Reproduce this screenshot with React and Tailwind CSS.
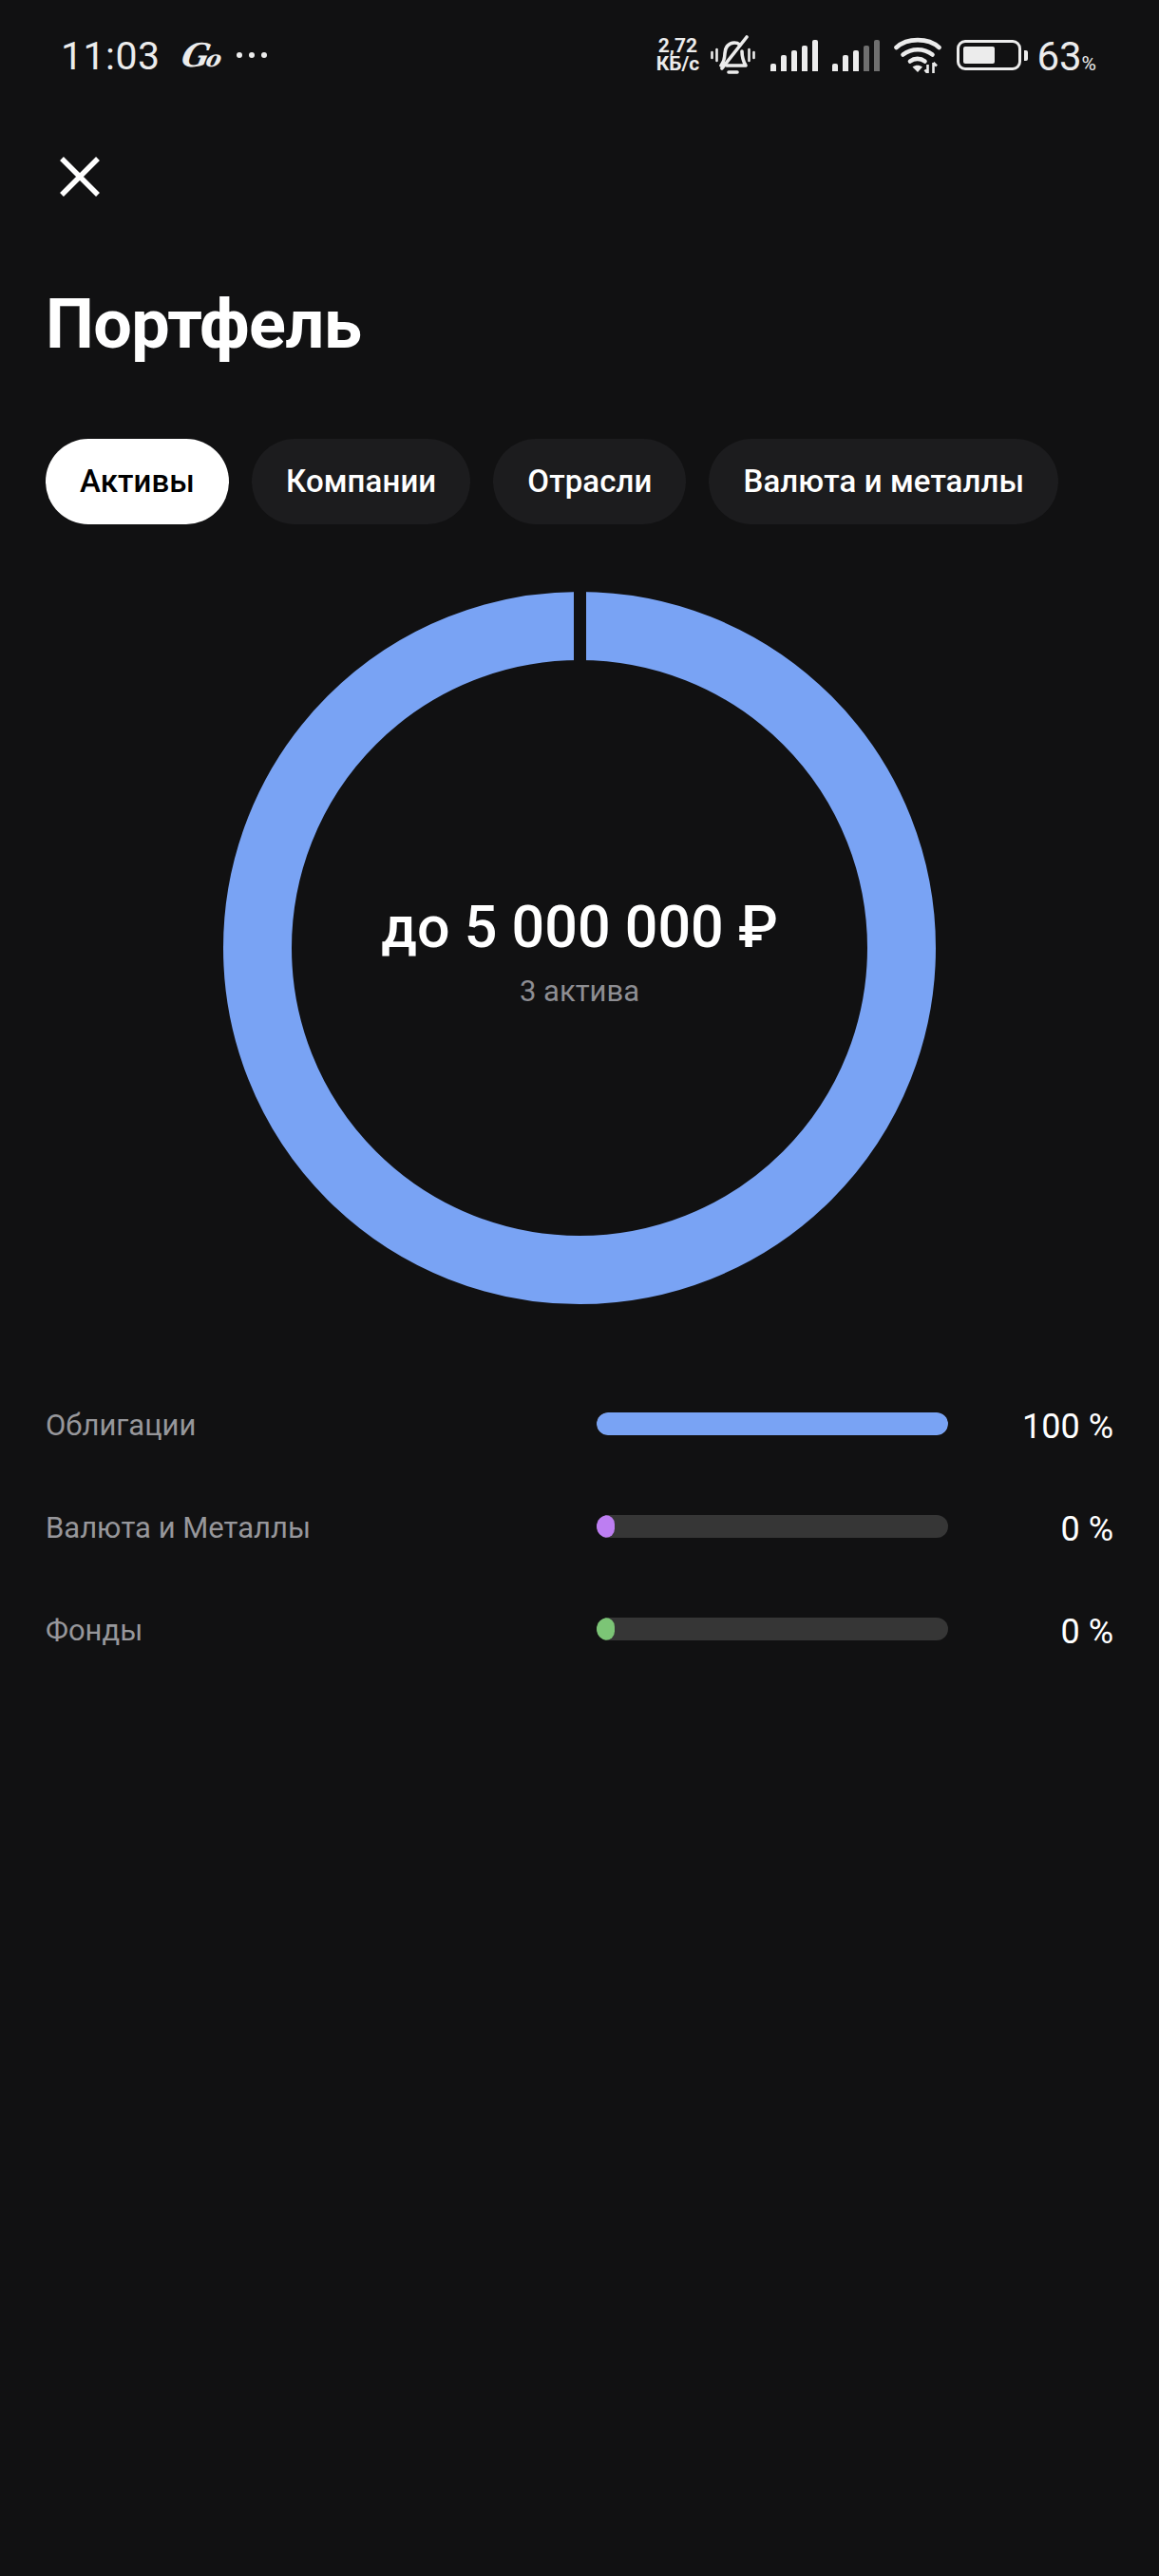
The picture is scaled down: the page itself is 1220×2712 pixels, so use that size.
import React from 'react';

const tabs = ['Активы', 'Компании', 'Отрасли', 'Валюта и металлы'];

const rows = [
  { label: 'Облигации', value: '100 %', color: 'bg-[#79a3f4]', width: '100%' },
  { label: 'Валюта и Металлы', value: '0 %', color: 'bg-[#bd7ef2]', width: '19px' },
  { label: 'Фонды', value: '0 %', color: 'bg-[#7cc576]', width: '19px' },
];

function Signal({ dim = 0 }) {
  const heights = [8, 17, 22, 27, 33];
  return (
    <div className="flex items-end gap-[5px] h-[33px] w-[50px]">
      {heights.map((h, i) => (
        <div
          key={i}
          className={i >= heights.length - dim ? 'w-[6px] rounded-t-[2px] bg-[#6f6f6f]' : 'w-[6px] rounded-t-[2px] bg-[#ececec]'}
          style={{ height: h }}
        />
      ))}
    </div>
  );
}

function BellOff() {
  return (
    <svg width="47" height="42" viewBox="0 0 47 42" fill="none" stroke="#ececec" strokeWidth="3.6" strokeLinecap="round" strokeLinejoin="round">
      <path d="M11 32c3-4 4-7 4-13 0-6 4-11 10-11 2 0 4 .6 5.500 1.800" />
      <path d="M33 17c0 6 1 10 4 15H17" />
      <path d="M19 39h9" />
      <path d="M38 2 12 35" />
      <path d="M1.500 18v6M6.500 15v12M40.500 15v12M45.500 18v6" strokeWidth="2.600" />
    </svg>
  );
}

function Wifi() {
  return (
    <svg width="50" height="38" viewBox="0 0 50 38" fill="none">
      <g stroke="#ececec" strokeWidth="4.600" strokeLinecap="round">
        <path d="M2.500 11C14 0.500 36 0.500 47.500 11" />
        <path d="M9.500 18.500c9-7 22-7 31 0" />
        <path d="M17 25.500c4.500-3.500 11-3.500 15.500 0" />
      </g>
      <path d="M19.500 31.500c3.500-2.500 7-2.500 10.500 0l-5 5.500z" fill="#ececec" />
      <path d="M35.500 29v9M41.500 27v11M35.500 38l-3-3.500M41.500 27l3.500 3.500" stroke="#ececec" strokeWidth="2.600" />
    </svg>
  );
}

function StatusBar() {
  return (
    <div className="flex items-center justify-between h-[116px] pl-[64px] pr-[66px] text-[#ececec]">
      <div className="flex items-center">
        <span className="text-[41px] leading-none tracking-[0.5px] mt-[2px]">11:03</span>
        <span className="ml-[23px] w-[38px] flex items-baseline leading-none font-bold italic font-['DejaVu_Serif',serif] -skew-x-12">
          <span className="text-[34px] tracking-[-3px]">G</span>
          <span className="text-[24px]">o</span>
        </span>
        <div className="ml-[19px] flex gap-[7px]">
          <div className="w-[6px] h-[6px] rounded-full bg-[#ececec]" />
          <div className="w-[6px] h-[6px] rounded-full bg-[#ececec]" />
          <div className="w-[6px] h-[6px] rounded-full bg-[#ececec]" />
        </div>
      </div>
      <div className="flex items-center">
        <div className="flex flex-col items-center text-[21px] leading-[19px] font-bold w-[46px]">
          <span>2,72</span>
          <span>КБ/с</span>
        </div>
        <div className="ml-[12px]"><BellOff /></div>
        <div className="ml-[16px]"><Signal /></div>
        <div className="ml-[15px]"><Signal dim={2} /></div>
        <div className="ml-[15px]"><Wifi /></div>
        <div className="ml-[16px] flex items-center">
          <div className="w-[68px] h-[32px] rounded-[9px] border-[3px] border-[#ececec] p-[4px]">
            <div className="h-full w-[33px] rounded-[2px] bg-[#ececec]" />
          </div>
          <div className="ml-[3px] w-[4px] h-[11px] rounded-r-[2px] bg-[#ececec]" />
        </div>
        <div className="ml-[9px] mt-[4px] flex items-baseline">
          <span className="text-[42px] leading-none">63</span>
          <span className="text-[21px] leading-none">%</span>
        </div>
      </div>
    </div>
  );
}

function CloseIcon() {
  return (
    <svg width="42" height="42" viewBox="0 0 42 42" stroke="#ffffff" strokeWidth="5.5" className="block">
      <path d="M2 2 40 40M40 2 2 40" />
    </svg>
  );
}

function Donut() {
  return (
    <div className="grid place-items-center mt-[71px]">
      <svg width="750" height="750" viewBox="0 0 750 750" className="col-start-1 row-start-1 block">
        <circle cx="375" cy="375" r="339" fill="none" stroke="#79a3f4" strokeWidth="72" />
        {/* straight gap at 12 o'clock */}
        <rect x="369" y="0" width="13" height="76" fill="#111112" />
      </svg>
      <div className="col-start-1 row-start-1 flex flex-col items-center mt-[8px]">
        <div className="text-[61px] leading-[72px] font-medium text-white">до 5 000 000 ₽</div>
        <div className="mt-[12px] text-[31px] leading-[40px] text-[#8e8e93]">3 актива</div>
      </div>
    </div>
  );
}

export default function App() {
  return (
    <div className="w-[1220px] h-[2712px] bg-[#111112] font-['Roboto',sans-serif] overflow-hidden">
      <StatusBar />
      <div className="ml-[63px] mt-[49px]"><CloseIcon /></div>
      <h1 className="mt-[93px] ml-[48px] text-[72px] leading-[84px] font-bold tracking-[-0.6px] text-white">Портфель</h1>
      <div className="mt-[78px] ml-[48px] flex gap-[24px]">
        {tabs.map((t, i) => (
          <div
            key={t}
            className={
              i === 0
                ? 'h-[90px] px-[36px] flex items-center rounded-[45px] bg-white text-black text-[33px] tracking-[0.1px] font-medium'
                : 'h-[90px] px-[36px] flex items-center rounded-[45px] bg-[#1c1c1e] text-white text-[33px] tracking-[0.1px] font-medium'
            }
          >
            {t}
          </div>
        ))}
      </div>
      <Donut />
      <div className="mt-[114px] px-[48px] flex flex-col gap-[84px]">
        {rows.map((row) => (
          <div key={row.label} className="flex items-center h-[24px]">
            <div className="w-[580px] text-[31px] text-[#97979b] leading-none pt-[2px]">{row.label}</div>
            <div className="w-[370px] h-[24px] rounded-[12px] bg-[#363636] overflow-hidden">
              <div className={`h-full rounded-[12px] ${row.color}`} style={{ width: row.width }} />
            </div>
            <div className="flex-1 text-right text-[36px] text-white leading-none pt-[6px]">{row.value}</div>
          </div>
        ))}
      </div>
    </div>
  );
}
